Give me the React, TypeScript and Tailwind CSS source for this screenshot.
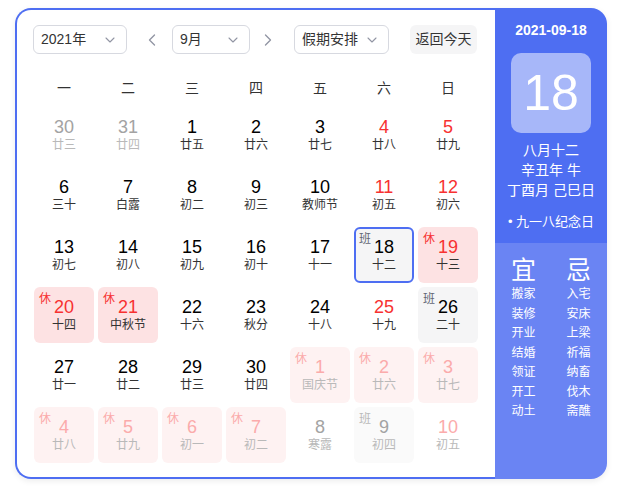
import { ChevronDown, ChevronLeft, ChevronRight } from 'lucide-react'

type Kind = 'normal' | 'weekend' | 'prev' | 'rest' | 'work' | 'fadeRest' | 'fadeWork' | 'fade' | 'fadeRed' | 'today'

interface Day {
  n: number
  lunar: string
  kind: Kind
}

const d = (n: number, lunar: string, kind: Kind = 'normal'): Day => ({ n, lunar, kind })

const weeks: Day[][] = [
  [d(30, '廿三', 'prev'), d(31, '廿四', 'prev'), d(1, '廿五'), d(2, '廿六'), d(3, '廿七'), d(4, '廿八', 'weekend'), d(5, '廿九', 'weekend')],
  [d(6, '三十'), d(7, '白露'), d(8, '初二'), d(9, '初三'), d(10, '教师节'), d(11, '初五', 'weekend'), d(12, '初六', 'weekend')],
  [d(13, '初七'), d(14, '初八'), d(15, '初九'), d(16, '初十'), d(17, '十一'), d(18, '十二', 'today'), d(19, '十三', 'rest')],
  [d(20, '十四', 'rest'), d(21, '中秋节', 'rest'), d(22, '十六'), d(23, '秋分'), d(24, '十八'), d(25, '十九', 'weekend'), d(26, '二十', 'work')],
  [d(27, '廿一'), d(28, '廿二'), d(29, '廿三'), d(30, '廿四'), d(1, '国庆节', 'fadeRest'), d(2, '廿六', 'fadeRest'), d(3, '廿七', 'fadeRest')],
  [d(4, '廿八', 'fadeRest'), d(5, '廿九', 'fadeRest'), d(6, '初一', 'fadeRest'), d(7, '初二', 'fadeRest'), d(8, '寒露', 'fade'), d(9, '初四', 'fadeWork'), d(10, '初五', 'fadeRed')]
]

const cellStyle: Record<Kind, { box: string; num: string; lunar: string; tag?: string; tagColor?: string }> = {
  normal: { box: '', num: 'text-[#000]', lunar: 'text-[#333]' },
  weekend: { box: '', num: 'text-[#f73131]', lunar: 'text-[#333]' },
  prev: { box: '', num: 'text-[#a3a3a3]', lunar: 'text-[#b9b9b9]' },
  rest: { box: 'bg-[#fde2e3]', num: 'text-[#f73131]', lunar: 'text-[#333]', tag: '休', tagColor: 'text-[#f73131]' },
  work: { box: 'bg-[#f5f5f6]', num: 'text-[#000]', lunar: 'text-[#333]', tag: '班', tagColor: 'text-[#626675]' },
  today: { box: 'bg-[#f5f5f6] border-2 border-[#4e6ef2]', num: 'text-[#000]', lunar: 'text-[#333]', tag: '班', tagColor: 'text-[#626675]' },
  fadeRest: { box: 'bg-[#fef2f2]', num: 'text-[#fbabab]', lunar: 'text-[#b9b9b9]', tag: '休', tagColor: 'text-[#fbabab]' },
  fadeWork: { box: 'bg-[#fafafa]', num: 'text-[#a3a3a3]', lunar: 'text-[#b9b9b9]', tag: '班', tagColor: 'text-[#b9b9b9]' },
  fade: { box: '', num: 'text-[#a3a3a3]', lunar: 'text-[#b9b9b9]' },
  fadeRed: { box: '', num: 'text-[#fbabab]', lunar: 'text-[#b9b9b9]' }
}

function Select({ label, width }: { label: string; width: string }) {
  return (
    <div className={`${width} flex h-[29px] items-center justify-between rounded-md border border-[#d7d9e0] bg-white pl-[7px] pr-[8px] text-[14px] text-[#333]`}>
      <span>{label}</span>
      <ChevronDown size={16} strokeWidth={1.6} className="text-[#9195a3]" />
    </div>
  )
}

function DayCell({ day }: { day: Day }) {
  const s = cellStyle[day.kind]
  const isToday = day.kind === 'today'
  return (
    <div className={`relative flex h-[56px] flex-col items-center rounded-md ${s.box}`}>
      {s.tag && (
        <span className={`absolute text-[12px] leading-[14px] ${s.tagColor} ${isToday ? 'left-[3px] top-[3px]' : 'left-[5px] top-[5px]'}`}>
          {s.tag}
        </span>
      )}
      <span className={`text-[18px] leading-[22px] ${s.num} ${isToday ? 'mt-[7px]' : 'mt-[9px]'}`}>{day.n}</span>
      <span className={`text-[12px] leading-[15px] ${s.lunar}`}>{day.lunar}</span>
    </div>
  )
}

const yi = ['搬家', '装修', '开业', '结婚', '领证', '开工', '动土']
const ji = ['入宅', '安床', '上梁', '祈福', '纳畜', '伐木', '斋醮']

export default function App() {
  return (
    <div className="min-h-screen bg-white pl-[15px] pt-[8px] font-['Liberation_Sans','Noto_Sans_CJK_SC',sans-serif]">
      <div className="flex h-[471px] w-[592px] rounded-2xl shadow-[0_2px_6px_rgba(0,0,0,0.08)]">
        <div className="w-[480px] rounded-l-2xl border-2 border-r-0 border-[#4e6ef2] bg-white pl-[16px] pt-[15px]">
          <div className="flex items-center">
            <Select label="2021年" width="w-[94px]" />
            <ChevronLeft size={20} strokeWidth={1.6} className="ml-[15px] text-[#9195a3]" />
            <Select label="9月" width="ml-[10px] w-[78px]" />
            <ChevronRight size={20} strokeWidth={1.6} className="ml-[8px] text-[#9195a3]" />
            <Select label="假期安排" width="ml-[16px] w-[95px]" />
            <button className="ml-[21px] h-[29px] w-[67px] rounded-md bg-[#f5f5f6] text-[14px] text-[#333]">返回今天</button>
          </div>

          <div className="ml-px mt-[19px] grid w-[444px] grid-cols-7 gap-x-[4px]">
            {['一', '二', '三', '四', '五', '六', '日'].map(w => (
              <div key={w} className="flex h-[30px] items-center justify-center text-[14px] text-[#333]">{w}</div>
            ))}
          </div>

          <div className="ml-px mt-[4px] grid w-[444px] grid-cols-7 gap-[4px]">
            {weeks.flat().map((day, i) => (
              <DayCell key={i} day={day} />
            ))}
          </div>
        </div>

        <div className="flex w-[112px] flex-col overflow-hidden rounded-r-2xl text-white">
          <div className="flex h-[235px] flex-col items-center bg-[#4e6ef2] pt-[12px]">
            <div className="text-[14px] font-bold leading-[20px]">2021-09-18</div>
            <div className="mt-[13px] flex h-[80px] w-[80px] items-center justify-center rounded-[10px] bg-[#a7b7f9] text-[50px] leading-none">18</div>
            <div className="mt-[7px] text-center text-[14px] leading-[20px]">
              <div>八月十二</div>
              <div>辛丑年 牛</div>
              <div>丁酉月 己巳日</div>
            </div>
            <div className="mt-[12px] text-[13px] leading-[20px]">• 九一八纪念日</div>
          </div>
          <div className="flex flex-1 justify-center gap-[30px] bg-[#6a84f3] pt-[12px]">
            <div className="flex flex-col items-center">
              <div className="text-[25px] leading-[30px]">宜</div>
              {yi.map(t => (
                <div key={t} className="text-[12px] leading-[19.5px]">{t}</div>
              ))}
            </div>
            <div className="flex flex-col items-center">
              <div className="text-[25px] leading-[30px]">忌</div>
              {ji.map(t => (
                <div key={t} className="text-[12px] leading-[19.5px]">{t}</div>
              ))}
            </div>
          </div>
        </div>
      </div>
    </div>
  )
}
